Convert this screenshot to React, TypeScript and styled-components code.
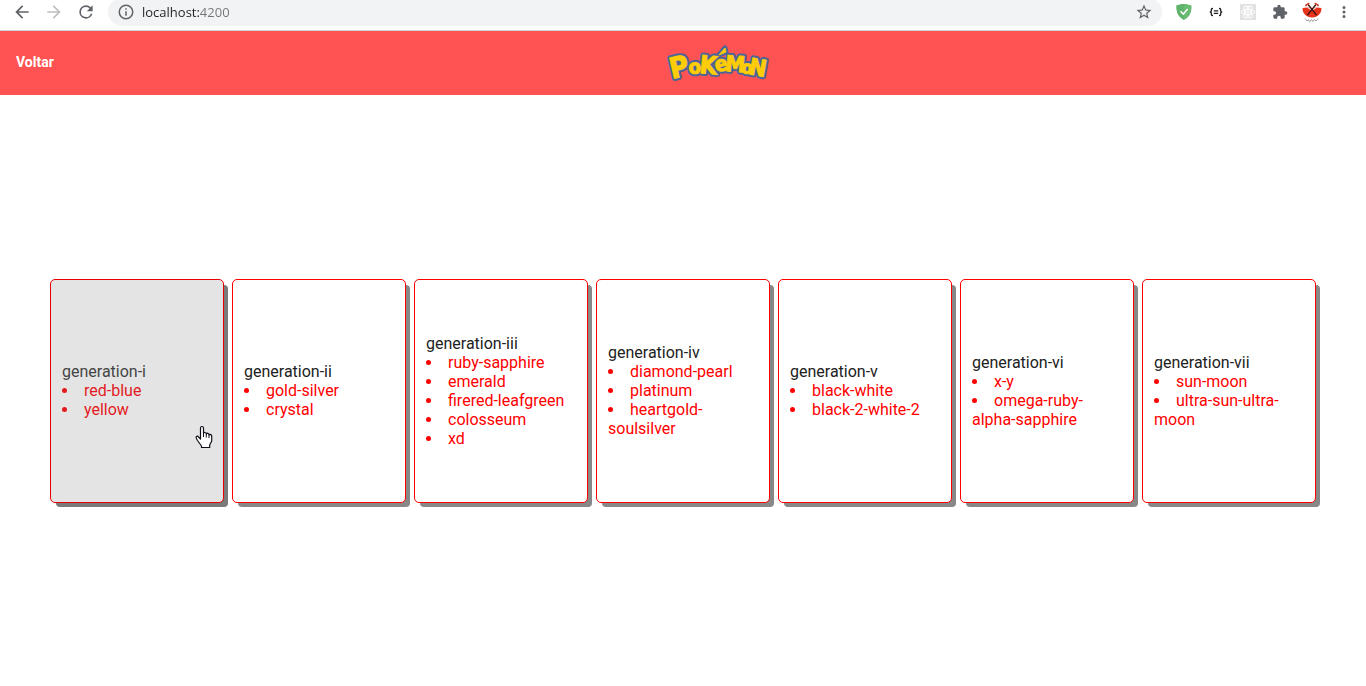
import React from "react";
import styled, { createGlobalStyle } from "styled-components";

const GlobalStyle = createGlobalStyle`
  *, *::before, *::after { box-sizing: border-box; }
  body {
    margin: 0;
    background: #fff;
    font-family: Roboto, "Liberation Sans", sans-serif;
    font-size: 16px;
    line-height: 19px;
  }
  #root { display: flex; flex-direction: column; min-height: 100vh; }
`;

const Toolbar = styled.div`
  display: flex;
  align-items: center;
  gap: 8px;
  padding: 0 8px 6px;
  border-bottom: 1px solid #cfd4da;
  overflow: hidden;
`;

const ToolGroup = styled.div`
  display: flex;
  gap: 4px;
  height: 24px;
`;

const ToolButton = styled.button`
  display: flex;
  align-items: center;
  justify-content: center;
  width: 28px;
  height: 24px;
  padding: 0;
  border: 0;
  background: none;
  color: #5f6368;
  cursor: pointer;
  &:disabled { color: #bdbfc1; cursor: default; }
`;

const AddressBar = styled.form`
  flex: 1;
  display: flex;
  align-items: center;
  height: 28px;
  margin: -2px 0;
  padding: 0 4px;
  border-radius: 14px;
  background: #f1f3f4;
`;

const AddressInput = styled.input`
  flex: 1;
  min-width: 0;
  height: 20px;
  margin-left: 2px;
  padding: 0;
  border: 0;
  outline: 0;
  font: 13px/20px "Open Sans", "Noto Sans", sans-serif;
  color: #202124;
  background: linear-gradient(to right, #202124 57px, #72767a 57px);
  background-clip: text;
  -webkit-background-clip: text;
  -webkit-text-fill-color: transparent;
`;

const Header = styled.header`
  display: flex;
  align-items: center;
  gap: 30px;
  height: 64px;
  padding: 0 16px;
  background: #ff5252;
`;

const BackLink = styled.a`
  padding-bottom: 2px;
  color: #fff;
  font-size: 14px;
  font-weight: 700;
  line-height: 20px;
  text-decoration: none;
`;

const LogoArea = styled.div`
  flex: 1;
  display: flex;
  justify-content: center;
`;

const Main = styled.main`
  flex: 1;
  display: grid;
  grid-template-columns: repeat(7, minmax(0, 1fr));
  gap: 8px;
  align-content: center;
  padding: 0 50px;
`;

const Card = styled.section<{ $active?: boolean }>`
  position: relative;
  display: flex;
  flex-direction: column;
  justify-content: center;
  min-height: 224px;
  padding: 0 11px;
  border: 1px solid ${(p) => (p.$active ? "#e60000" : "#ff0000")};
  border-radius: 5px;
  background: ${(p) => (p.$active ? "#e4e4e4" : "#fff")};
  box-shadow: 5px 5px 0 -1px ${(p) => (p.$active ? "#7a7a7a" : "#888")};
  color: ${(p) => (p.$active ? "#444" : "#212121")};
  cursor: pointer;
`;

const CardTitle = styled.h2`
  margin: 0;
  font-size: 16px;
  font-weight: 400;
  line-height: 19px;
`;

const VersionList = styled.ul<{ $active?: boolean }>`
  margin: 0;
  padding: 0;
  list-style: disc inside;
  color: ${(p) => (p.$active ? "#e31b1f" : "#ff0000")};
`;

const Pointer = styled.svg`
  position: absolute;
  right: 10px;
  top: 145px;
`;

const generations = [
  { name: "generation-i", versions: ["red-blue", "yellow"] },
  { name: "generation-ii", versions: ["gold-silver", "crystal"] },
  {
    name: "generation-iii",
    versions: ["ruby-sapphire", "emerald", "firered-leafgreen", "colosseum", "xd"],
  },
  { name: "generation-iv", versions: ["diamond-pearl", "platinum", "heartgold-soulsilver"] },
  { name: "generation-v", versions: ["black-white", "black-2-white-2"] },
  { name: "generation-vi", versions: ["x-y", "omega-ruby-alpha-sapphire"] },
  { name: "generation-vii", versions: ["sun-moon", "ultra-sun-ultra-moon"] },
];

const Glyph = ({ d, size = 20 }: { d: string; size?: number }) => (
  <svg width={size} height={size} viewBox="0 0 24 24" fill="currentColor" aria-hidden="true">
    <path d={d} />
  </svg>
);

const icons = {
  back: "M20 11H7.83l5.59-5.59L12 4l-8 8 8 8 1.41-1.41L7.83 13H20v-2z",
  forward: "M12 4l-1.41 1.41L16.17 11H4v2h12.17l-5.58 5.59L12 20l8-8z",
  reload:
    "M17.65 6.35A7.96 7.96 0 0 0 12 4a8 8 0 1 0 7.73 10h-2.08A6 6 0 1 1 12 6c1.66 0 3.14.69 4.22 1.78L13 11h7V4l-2.35 2.35z",
  info: "M11 17h2v-6h-2v6zm1-15a10 10 0 1 0 0 20 10 10 0 0 0 0-20zm0 18a8 8 0 1 1 0-16 8 8 0 0 1 0 16zM11 9h2V7h-2v2z",
  star: "M22 9.24l-7.19-.62L12 2 9.19 8.63 2 9.24l5.46 4.73L5.82 21 12 17.27 18.18 21l-1.63-7.03L22 9.24zM12 15.4l-3.76 2.27 1-4.28-3.32-2.88 4.38-.38L12 6.1l1.71 4.04 4.38.38-3.32 2.88 1 4.28L12 15.4z",
  puzzle:
    "M20.5 11H19V7c0-1.1-.9-2-2-2h-4V3.5a2.5 2.5 0 0 0-5 0V5H4c-1.1 0-2 .9-2 2v3.8h1.5a2.7 2.7 0 0 1 0 5.4H2V20c0 1.1.9 2 2 2h3.8v-1.5a2.7 2.7 0 0 1 5.4 0V22H17c1.1 0 2-.9 2-2v-4h1.5a2.5 2.5 0 0 0 0-5z",
  more: "M12 8a2 2 0 1 0 0-4 2 2 0 0 0 0 4zm0 2a2 2 0 1 0 0 4 2 2 0 0 0 0-4zm0 6a2 2 0 1 0 0 4 2 2 0 0 0 0-4z",
};

const ShieldIcon = () => (
  <svg width="16" height="18" viewBox="0 0 16 18" aria-hidden="true">
    <path d="M8 1c2.500 0 5 .6 7.500 1.600C15.600 9 14.500 13.500 8 17 1.500 13.500.4 9 .5 2.600 3 1.600 5.500 1 8 1z" fill="#68bc71" />
    <path d="M8 1v16C1.500 13.500.4 9 .5 2.600 3 1.600 5.500 1 8 1z" fill="#5fb36a" />
    <path d="M4.500 8.300l2.800 2.800L11.700 6" fill="none" stroke="#fff" strokeWidth="1.500" />
  </svg>
);

const BracesIcon = () => (
  <svg width="14" height="12" viewBox="0 0 14 12" fill="none" stroke="#202124" strokeWidth="1.300" aria-hidden="true">
    <path d="M4 2.500H3.500Q2.300 2.500 2.300 3.500V5Q2.300 6 .8 6 2.300 6 2.300 7V8.500Q2.300 9.500 3.500 9.500H4M10 2.500h.5q1.200 0 1.200 1V5q0 1 1.500 1-1.500 0-1.500 1v1.500q0 1-1.200 1H10M4.800 4.800h4.400M4.800 7.300h4.400" />
  </svg>
);

const AtomIcon = () => (
  <svg width="16" height="16" viewBox="0 0 16 16" fill="none" aria-hidden="true">
    <rect width="16" height="16" fill="#e2e2e2" />
    <g stroke="#fff" strokeWidth="1">
      <ellipse cx="8" cy="8" rx="6.500" ry="2.600" />
      <ellipse cx="8" cy="8" rx="6.500" ry="2.600" transform="rotate(60 8 8)" />
      <ellipse cx="8" cy="8" rx="6.500" ry="2.600" transform="rotate(120 8 8)" />
    </g>
    <circle cx="8" cy="8" r="1.300" fill="#fff" />
  </svg>
);

const ProfileIcon = () => (
  <svg width="20" height="22" viewBox="0 0 20 22" fill="none" aria-hidden="true">
    <path d="M.5 7Q10 5.500 19.500 7 19.500 13 14.500 15.500 10 17.300 5.500 15.500.5 13 .5 7z" fill="#e8331c" />
    <path d="M5 6.500Q10 5.500 15 6.500L10 10z" fill="#fbe3de" />
    <path d="M5.500 14L14 3.500M14.500 14L6 3.500" stroke="#3a1410" strokeWidth="1.300" />
    <path d="M12.500 2.500q3 .2 4 2.700M7.500 2.500q-3 .2-4 2.700" stroke="#c8452f" strokeWidth="1.400" />
    <path d="M3 17.500l2 2.500 1.500-1.500 1 2.500 2-2.500 1.500 2 1.500-2 1.500 1.500 2.500-2.500" stroke="#a0a0a0" strokeWidth="1" />
  </svg>
);

const letters = [
  { c: "P", x: 7, y: 36, s: 29, r: -13 },
  { c: "o", x: 24, y: 31, s: 20, r: -4 },
  { c: "K", x: 34, y: 30, s: 25, r: 5 },
  { c: "e", x: 51, y: 29, s: 21, r: -10 },
  { c: "M", x: 60, y: 28, s: 22, r: 4 },
  { c: "o", x: 76, y: 30, s: 18, r: 6 },
  { c: "N", x: 83, y: 31, s: 23, r: 10 },
];

const LogoLetters = () => (
  <>
    {letters.map((l, i) => (
      <text key={i} x={l.x} y={l.y} fontSize={l.s} transform={`rotate(${l.r} ${l.x} ${l.y})`}>
        {l.c}
      </text>
    ))}
    <path d="M54 12L60 5L61 9z" />
  </>
);

const Logo = () => (
  <svg
    width="104"
    height="40"
    viewBox="0 0 104 40"
    overflow="visible"
    role="img"
    aria-label="Pokémon"
    fontFamily='"DejaVu Sans Condensed", "DejaVu Sans", sans-serif'
    fontWeight="700"
  >
    <g fill="#2f62a8" stroke="#4a6596" strokeWidth="5" strokeLinejoin="round">
      <LogoLetters />
    </g>
    <g fill="#ffcc08" stroke="#ffcc08" strokeWidth="1">
      <LogoLetters />
    </g>
  </svg>
);

const HandPointer = () => (
  <Pointer width="18" height="24" viewBox="0 0 18 24" aria-hidden="true">
    <path
      d="M5.500 14V3Q5.500 1.500 7 1.500T8.500 3V8.500Q8.700 7.300 10 7.500T11.300 9Q11.600 8 12.800 8.300T14 10Q14.500 9 15.700 9.600T16.700 11.500V16L14.700 20V22.500H6.500V21L2.500 15.500Q.5 12.500 1.500 11.500T3.500 12z"
      fill="#fff"
      stroke="#101018"
      strokeWidth="1.200"
      strokeLinejoin="round"
    />
    <path d="M8.500 8v4M11.300 9v3.500M14 10v3" stroke="#101018" strokeWidth="1" />
  </Pointer>
);

export default function App() {
  return (
    <>
      <GlobalStyle />
      <Toolbar>
        <ToolGroup>
          <ToolButton aria-label="Back"><Glyph d={icons.back} /></ToolButton>
          <ToolButton aria-label="Forward" disabled><Glyph d={icons.forward} /></ToolButton>
          <ToolButton aria-label="Reload"><Glyph d={icons.reload} /></ToolButton>
        </ToolGroup>
        <AddressBar onSubmit={(e) => e.preventDefault()}>
          <ToolButton type="button" aria-label="Site information"><Glyph d={icons.info} size={18} /></ToolButton>
          <AddressInput aria-label="Address" defaultValue="localhost:4200" spellCheck={false} />
          <ToolButton type="button" aria-label="Bookmark"><Glyph d={icons.star} size={18} /></ToolButton>
        </AddressBar>
        <ToolGroup>
          <ToolButton aria-label="Ad blocker"><ShieldIcon /></ToolButton>
          <ToolButton aria-label="JSON viewer"><BracesIcon /></ToolButton>
          <ToolButton aria-label="React tools"><AtomIcon /></ToolButton>
          <ToolButton aria-label="Extensions"><Glyph d={icons.puzzle} size={16} /></ToolButton>
          <ToolButton aria-label="Profile"><ProfileIcon /></ToolButton>
          <ToolButton aria-label="Menu"><Glyph d={icons.more} size={18} /></ToolButton>
        </ToolGroup>
      </Toolbar>
      <Header>
        <BackLink href="#">Voltar</BackLink>
        <LogoArea><Logo /></LogoArea>
      </Header>
      <Main>
        {generations.map((g, i) => (
          <Card key={g.name} $active={i === 0}>
            <CardTitle>{g.name}</CardTitle>
            <VersionList $active={i === 0}>
              {g.versions.map((v) => (
                <li key={v}>{v}</li>
              ))}
            </VersionList>
            {i === 0 && <HandPointer />}
          </Card>
        ))}
      </Main>
    </>
  );
}
